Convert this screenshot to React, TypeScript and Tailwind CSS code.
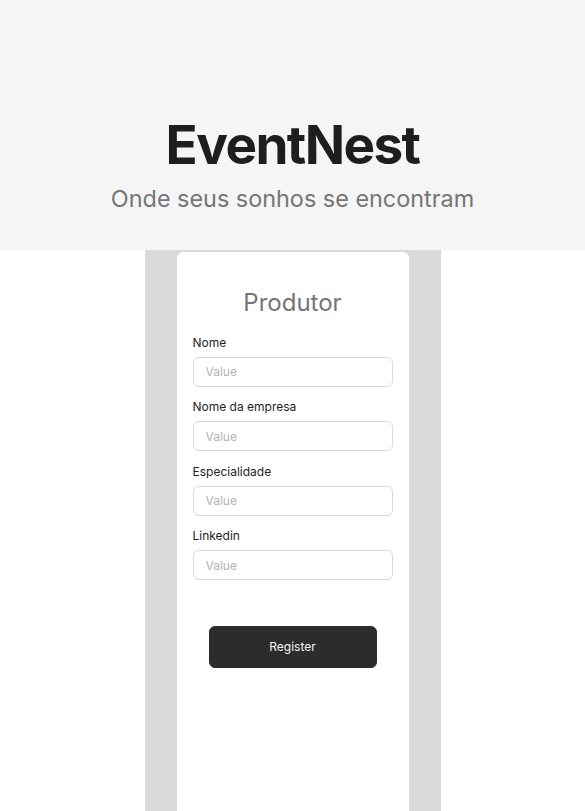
const fields = ["Nome", "Nome da empresa", "Especialidade", "Linkedin"];

export default function App() {
    return (
        <div className="w-full min-h-[811px] bg-white flex flex-col font-['Inter',sans-serif]">
            <header className="h-[250px] bg-[#f5f5f5] flex flex-col items-center pt-[114px]">
                <h1 className="text-[53px] leading-[1.2] font-bold tracking-[-0.03em] text-[#1e1e1e]">
                    EventNest
                </h1>
                <p className="mt-[7px] text-[23.4px] leading-[1.2] text-[#757575]">
                    Onde seus sonhos se encontram
                </p>
            </header>

            <div className="flex-1 flex justify-center">
                <div className="w-[296px] bg-[#d9d9d9] flex justify-center">
                    <div className="w-[232px] mt-[2px] bg-white rounded-t-[6px] px-[16px] pt-[37px] flex flex-col">
                        <h2 className="text-center text-[24px] leading-[1.2] text-[#757575]">
                            Produtor
                        </h2>

                        <form className="mt-[17px] flex flex-col gap-[12.5px]">
                            {fields.map((f) => (
                                <label key={f} className="flex flex-col gap-[6px]">
                                    <span className="text-[12px] leading-[16px] text-[#1e1e1e]">{f}</span>
                                    <input
                                        placeholder="Value"
                                        className="h-[30px] w-full rounded-[6px] border border-[#d9d9d9] px-[12px] text-[12px] text-[#1e1e1e] placeholder:text-[#b3b3b3] outline-none"
                                    />
                                </label>
                            ))}

                            <div className="px-[16px] mt-[33px]">
                                <button
                                    type="button"
                                    className="w-full h-[42px] rounded-[6px] bg-[#2c2c2c] border border-[#2c2c2c] text-[12px] text-[#f5f5f5]"
                                >
                                    Register
                                </button>
                            </div>
                        </form>
                    </div>
                </div>
            </div>
        </div>
    );
}
